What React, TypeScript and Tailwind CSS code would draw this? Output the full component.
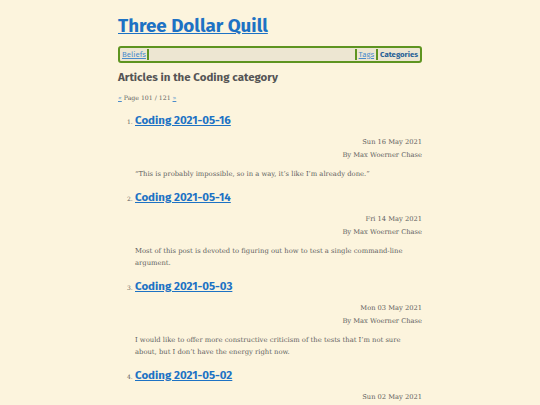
import React from "react";

const heading = { fontFamily: "'Fira Sans', 'Open Sans', 'Noto Sans', sans-serif" };
const body = { fontFamily: "'Roboto Slab', 'DejaVu Serif', serif" };

const items = [
  { n: 1, title: "Coding 2021-05-16", date: "Sun 16 May 2021", excerpt: "\u201CThis is probably impossible, so in a way, it\u2019s like I\u2019m already done.\u201D" },
  { n: 2, title: "Coding 2021-05-14", date: "Fri 14 May 2021", excerpt: "Most of this post is devoted to figuring out how to test a single command-line argument." },
  { n: 3, title: "Coding 2021-05-03", date: "Mon 03 May 2021", excerpt: "I would like to offer more constructive criticism of the tests that I\u2019m not sure about, but I don\u2019t have the energy right now." },
  { n: 4, title: "Coding 2021-05-02", date: "Sun 02 May 2021", excerpt: "" },
];

export default function App() {
  return (
    <div className="h-[405px] w-full bg-[#fcf4dd] overflow-hidden">
      <div className="w-[304px] mx-auto pt-[14px]">
        <a href="#" className="block text-[18.8px] leading-[24px] font-bold text-[#1d72c4] underline" style={heading}>
          Three Dollar Quill
        </a>
        <nav className="mt-[8px] flex items-center h-[17px] border-2 border-[#5e9420] rounded-[3px] bg-[#ede6d2] px-[2px] text-[7.8px]" style={heading}>
          <a href="#" className="text-[#4a8ccc] underline">Beliefs</a>
          <span className="ml-[1px] w-[2px] h-[11px] bg-[#5e9420]" />
          <span className="flex-1" />
          <span className="w-[2px] h-[11px] bg-[#5e9420]" />
          <a href="#" className="ml-[2px] text-[#4a8ccc] underline">Tags</a>
          <span className="ml-[2px] w-[2px] h-[11px] bg-[#5e9420]" />
          <a href="#" className="ml-[2px] font-bold text-[#255f96]">Categories</a>
        </nav>
        <h1 className="mt-[6px] text-[11.5px] leading-[16px] font-bold text-[#555555]" style={heading}>
          Articles in the Coding category
        </h1>
        <p className="mt-[8px] text-[6.2px] leading-[10px] text-[#5f5f5f]" style={body}>
          <a href="#" className="text-[#4a8ccc] underline">«</a> Page 101 / 121 <a href="#" className="text-[#4a8ccc] underline">»</a>
        </p>
        <ol className="mt-[8px]">
          {items.map((it) => (
            <li key={it.n} className="pl-[17px]">
              <div className="flex items-baseline h-[18px]">
                <span className="-ml-[8px] w-[8px] text-[6px] text-[#5f5f5f]" style={body}>{it.n}.</span>
                <a href="#" className="text-[11.5px] leading-[18px] font-bold text-[#1d72c4] underline" style={heading}>
                  {it.title}
                </a>
              </div>
              <div className="mt-[7px] text-right text-[6.7px] leading-[13px] text-[#5f5f5f]" style={body}>
                <div>{it.date}</div>
                <div>By Max Woerner Chase</div>
              </div>
              {it.excerpt && (
                <p className="mt-[6px] mb-[8px] text-[6.8px] leading-[12px] text-[#5f5f5f] pr-[6px]" style={body}>
                  {it.excerpt}
                </p>
              )}
            </li>
          ))}
        </ol>
      </div>
    </div>
  );
}
